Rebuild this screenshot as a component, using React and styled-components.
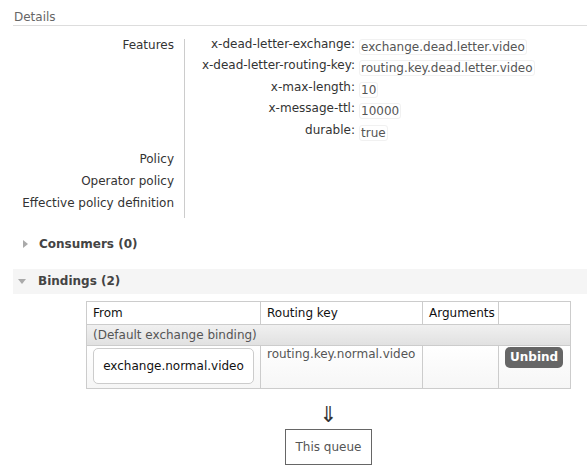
import React from "react";
import styled, { createGlobalStyle } from "styled-components";

const GlobalStyle = createGlobalStyle`
  html, body { margin: 0; padding: 0; background: #fff; }
  body {
    font-family: "DejaVu Sans", Verdana, sans-serif;
    font-size: 12px;
    color: #484848;
  }
`;

const Page = styled.div`
  padding-left: 13px;
`;

const SectionTitle = styled.h2`
  margin: 0;
  padding: 10px 0 1px 1px;
  font-size: 12px;
  line-height: 14px;
  font-weight: normal;
  color: #666;
  border-bottom: 1px solid #ddd;
`;

const Facts = styled.div`
  display: grid;
  grid-template-columns: 171px auto;
  justify-content: start;
  margin-top: 8px;
  padding-bottom: 4px;
  background: linear-gradient(#ccc, #ccc) no-repeat 171px 5px / 1px calc(100% - 5px);
`;

const FactLabel = styled.div`
  text-align: right;
  padding-right: 10px;
  line-height: 22px;
  color: #333;
`;

const FactValue = styled.div`
  padding-left: 12px;
  padding-bottom: ${(p) => (p.$gap ? "7px" : "0")};
  min-height: 22px;
`;

const KeyValues = styled.div`
  display: grid;
  grid-template-columns: 163px auto;
  justify-content: start;
  grid-auto-rows: 21.4px;
`;

const Key = styled.div`
  text-align: right;
  padding-right: 4px;
  line-height: 21.4px;
  color: #333;
  white-space: nowrap;
`;

const Val = styled.div`
  box-sizing: border-box;
  padding-top: 5px;
`;

const ValueTag = styled.span`
  display: inline-block;
  line-height: 14px;
  padding: 0 1px;
  border: 1px solid #f1f1f1;
  border-radius: 3px;
  color: #555;
`;

const Toggle = styled.span`
  width: 0;
  height: 0;
  ${(p) =>
    p.$open
      ? `
    border-top: 5px solid #aaa;
    border-left: 4.5px solid transparent;
    border-right: 4.5px solid transparent;
    margin: 0 12px 0 5px;
  `
      : `
    border-left: 5px solid #aaa;
    border-top: 4.5px solid transparent;
    border-bottom: 4.5px solid transparent;
    margin: 0 11px 0 10px;
  `}
`;

const SectionHeader = styled.h2`
  display: flex;
  align-items: center;
  margin: ${(p) => p.$mt}px 0 0 0;
  height: 25px;
  font-size: 12px;
  line-height: 25px;
  font-weight: bold;
  color: #444;
  background: ${(p) => (p.$shaded ? "#f5f5f5" : "transparent")};
`;

const Flow = styled.div`
  display: inline-flex;
  flex-direction: column;
  align-items: center;
  margin: 7px 0 0 73px;
`;

const Table = styled.table`
  border-collapse: collapse;
  table-layout: fixed;
  width: 484px;
`;

const Th = styled.th`
  border: 1px solid #ccc;
  padding: 4px 6px;
  line-height: 14px;
  font-weight: normal;
  text-align: left;
  color: #111;
  background: #fff;
`;

const GroupRow = styled.tr`
  background: linear-gradient(#f1f1f1, #e1e1e1);
`;

const GroupCell = styled.td`
  border: 1px solid #ccc;
  padding: 3px 6px;
  line-height: 14px;
  color: #555;
`;

const DataRow = styled.tr`
  background: linear-gradient(#fff, #f6f6f6);
`;

const Td = styled.td`
  border: 1px solid #ccc;
  padding: 1px 6px 4px;
  line-height: 14px;
  vertical-align: top;
  color: #555;
`;

const FromBox = styled.div`
  margin-top: 1px;
  padding: 10px 0;
  border: 1px solid #ccc;
  border-radius: 5px;
  background: #fff;
  text-align: center;
  line-height: 14px;
  color: #111;
`;

const UnbindButton = styled.button`
  display: inline-block;
  margin: 0;
  border: none;
  border-radius: 5px;
  padding: 3px 5px 4px;
  background: #666;
  color: #fff;
  font-family: inherit;
  font-size: 12px;
  font-weight: bold;
  line-height: 14px;
`;

const Arrow = styled.div`
  margin-top: 15px;
  font-size: 22px;
  line-height: 22px;
  height: 22px;
  color: #333;
`;

const QueueBox = styled.div`
  margin-top: 3px;
  padding: 10px;
  border: 1px solid #666;
  line-height: 14px;
  color: #555;
`;

const features = [
  ["x-dead-letter-exchange:", "exchange.dead.letter.video"],
  ["x-dead-letter-routing-key:", "routing.key.dead.letter.video"],
  ["x-max-length:", "10"],
  ["x-message-ttl:", "10000"],
  ["durable:", "true"],
];

export default function App() {
  return (
    <>
      <GlobalStyle />
      <Page>
        <SectionTitle>Details</SectionTitle>
        <Facts>
          <FactLabel>Features</FactLabel>
          <FactValue $gap>
            <KeyValues>
              {features.map(([k, v]) => (
                <React.Fragment key={k}>
                  <Key>{k}</Key>
                  <Val>
                    <ValueTag>{v}</ValueTag>
                  </Val>
                </React.Fragment>
              ))}
            </KeyValues>
          </FactValue>
          <FactLabel>Policy</FactLabel>
          <FactValue />
          <FactLabel>Operator policy</FactLabel>
          <FactValue />
          <FactLabel>Effective policy definition</FactLabel>
          <FactValue />
        </Facts>

        <SectionHeader $mt={14}>
          <Toggle />
          Consumers (0)
        </SectionHeader>

        <SectionHeader $mt={12} $shaded>
          <Toggle $open />
          Bindings (2)
        </SectionHeader>

        <Flow>
          <Table>
            <colgroup>
              <col style={{ width: 174 }} />
              <col style={{ width: 162 }} />
              <col style={{ width: 76 }} />
              <col style={{ width: 72 }} />
            </colgroup>
            <thead>
              <tr>
                <Th>From</Th>
                <Th>Routing key</Th>
                <Th>Arguments</Th>
                <Th></Th>
              </tr>
            </thead>
            <tbody>
              <GroupRow>
                <GroupCell colSpan={4}>(Default exchange binding)</GroupCell>
              </GroupRow>
              <DataRow>
                <Td>
                  <FromBox>exchange.normal.video</FromBox>
                </Td>
                <Td>routing.key.normal.video</Td>
                <Td></Td>
                <Td>
                  <UnbindButton>Unbind</UnbindButton>
                </Td>
              </DataRow>
            </tbody>
          </Table>
          <Arrow>⇓</Arrow>
          <QueueBox>This queue</QueueBox>
        </Flow>
      </Page>
    </>
  );
}
